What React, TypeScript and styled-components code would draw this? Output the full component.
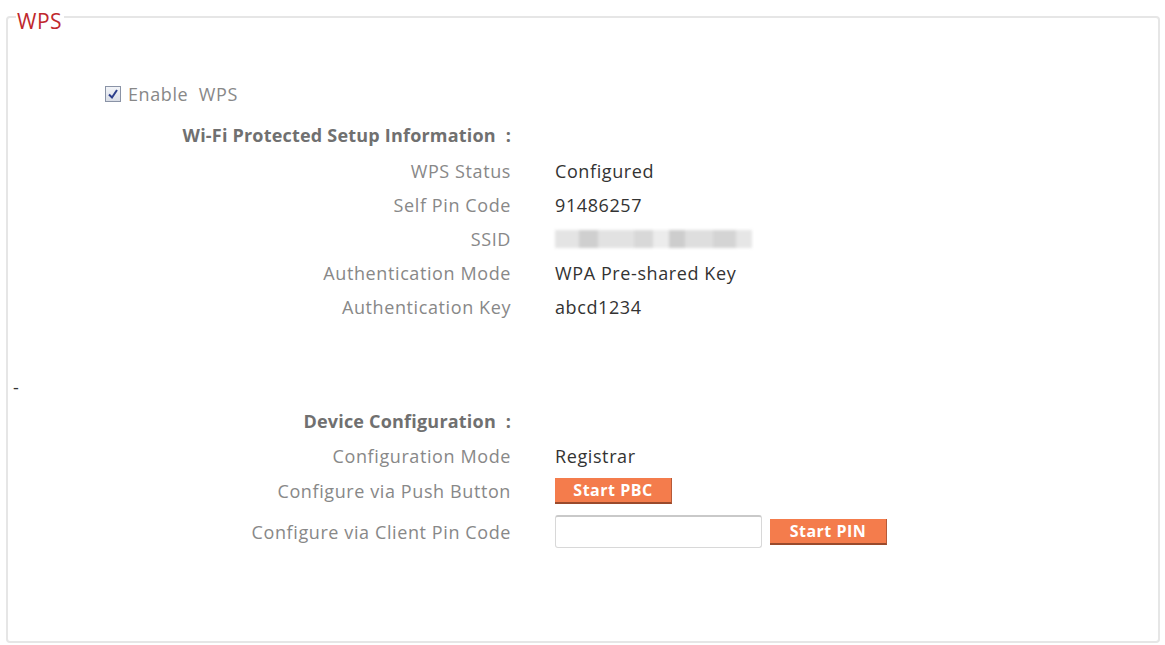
import styled, { createGlobalStyle } from "styled-components";

const GlobalStyle = createGlobalStyle`
  html, body {
    margin: 0;
    padding: 0;
    background: #ffffff;
  }
  body {
    font-family: "Open Sans", "Liberation Sans", sans-serif;
    font-size: 18px;
    letter-spacing: 0.6px;
    color: #333;
  }
`;

const Page = styled.div`
  width: 1165px;
  height: 645px;
  padding: 0 5px 2px 6px;
  box-sizing: border-box;
`;

const Fieldset = styled.fieldset`
  margin: 0;
  height: 100%;
  box-sizing: border-box;
  border: 2px solid #e6e6e6;
  border-radius: 4px;
  padding: 0;
`;

const Legend = styled.legend`
  color: #c0282d;
  font-size: 21px;
  letter-spacing: 0.5px;
  margin-left: 8px;
  padding: 9px 2px 0 1px;
  line-height: 24px;
`;

const Body = styled.div`
  padding-top: 51px;
`;

const CheckRow = styled.label`
  display: flex;
  align-items: center;
  gap: 7px;
  margin-left: 97px;
  color: #888;
  height: 20px;
`;

const Box = styled.span`
  width: 14px;
  height: 14px;
  border: 1px solid #8a93a6;
  background: linear-gradient(#f2f4f8, #d9dde6);
  display: flex;
  align-items: center;
  justify-content: center;
`;

const Section = styled.div<{ $top: number; $rows: string }>`
  display: grid;
  grid-template-columns: 503px auto;
  grid-template-rows: ${(p) => p.$rows};
  column-gap: 44px;
  align-items: center;
  margin-top: ${(p) => p.$top}px;
`;

const Heading = styled.div`
  text-align: right;
  font-weight: 700;
  letter-spacing: 0.2px;
  color: #707070;
`;

const Label = styled.div`
  text-align: right;
  color: #888;
`;

const Value = styled.div`
  display: flex;
  align-items: center;
  gap: 8px;
  color: #333;
`;

const Blur = styled.div`
  width: 197px;
  height: 18px;
  background: linear-gradient(
    90deg,
    #e4e4e4 0 12%,
    #cfcfcf 12% 22%,
    #e2e2e2 22% 40%,
    #d8d8d8 40% 50%,
    #ececec 50% 58%,
    #cdcdcd 58% 66%,
    #dedede 66% 80%,
    #d4d4d4 80% 92%,
    #e6e6e6 92% 100%
  );
  filter: blur(1.5px);
`;

const Button = styled.button`
  background: #f47c4c;
  color: #fff;
  border: none;
  border-bottom: 2px solid #9a4a2c;
  border-right: 1px solid #b65a38;
  font-family: "Open Sans", "Liberation Sans", sans-serif;
  font-weight: 700;
  font-size: 16px;
  letter-spacing: 0.5px;
  padding: 0;
  height: 26px;
  width: 117px;
`;

const PinInput = styled.input`
  width: 207px;
  height: 33px;
  box-sizing: border-box;
  border: 1px solid #d8d8d8;
  border-top: 2px solid #c9c9c9;
  border-radius: 3px;
`;

const Dash = styled.div`
  margin-left: 5px;
  margin-top: 57px;
  height: 12px;
  line-height: 12px;
  color: #333;
`;

export default function App() {
  return (
    <>
      <GlobalStyle />
      <Page>
        <Fieldset>
          <Legend>WPS</Legend>
          <Body>
            <CheckRow>
              <Box>
                <svg width="12" height="12" viewBox="0 0 12 12">
                  <path d="M2 6.5 L5 9.5 L10 2" stroke="#2c3e8c" strokeWidth="2" fill="none" />
                </svg>
              </Box>
              Enable&nbsp; WPS
            </CheckRow>
            <Section $top={12} $rows="38px repeat(5, 34px)">
              <Heading>Wi-Fi Protected Setup Information&nbsp; :</Heading>
              <div />
              <Label>WPS Status</Label>
              <Value>Configured</Value>
              <Label>Self Pin Code</Label>
              <Value>91486257</Value>
              <Label>SSID</Label>
              <Value>
                <Blur />
              </Value>
              <Label>Authentication Mode</Label>
              <Value>WPA Pre-shared Key</Value>
              <Label>Authentication Key</Label>
              <Value>abcd1234</Value>
            </Section>
            <Dash>-</Dash>
            <Section $top={10} $rows="35px 35px 36px 45px">
              <Heading>Device Configuration&nbsp; :</Heading>
              <div />
              <Label>Configuration Mode</Label>
              <Value>Registrar</Value>
              <Label>Configure via Push Button</Label>
              <Value>
                <Button>Start PBC</Button>
              </Value>
              <Label>Configure via Client Pin Code</Label>
              <Value>
                <PinInput />
                <Button>Start PIN</Button>
              </Value>
            </Section>
          </Body>
        </Fieldset>
      </Page>
    </>
  );
}
